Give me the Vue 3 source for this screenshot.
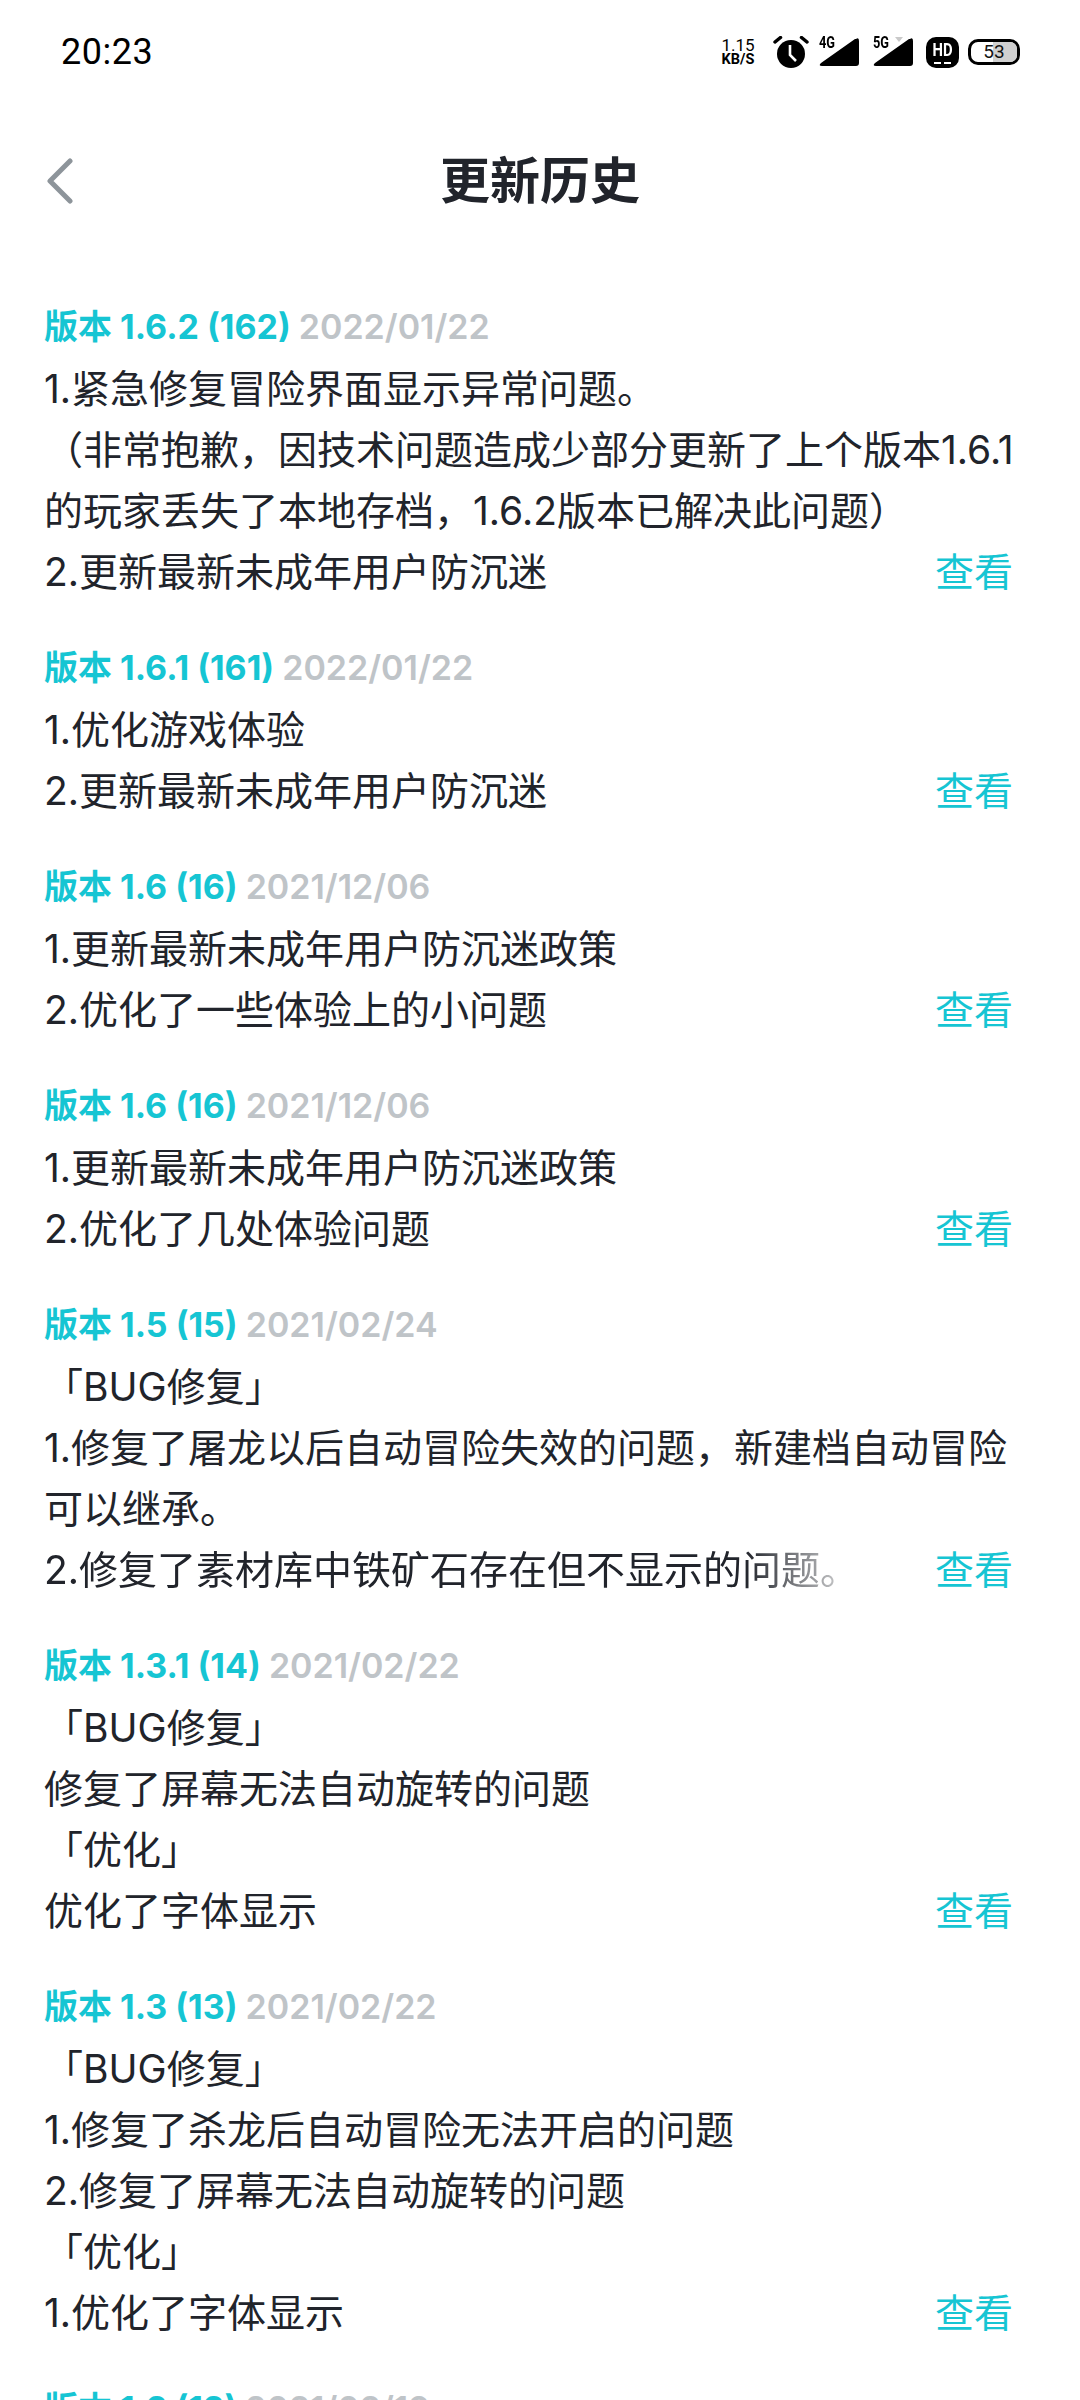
<script setup>
const entries = [
  { v: '版本 1.6.2 (162)', d: '2022/01/22', lines: ['1.紧急修复冒险界面显示异常问题。', '（非常抱歉，因技术问题造成少部分更新了上个版本1.6.1的玩家丢失了本地存档，1.6.2版本已解决此问题）'], last: '2.更新最新未成年用户防沉迷' },
  { v: '版本 1.6.1 (161)', d: '2022/01/22', lines: ['1.优化游戏体验'], last: '2.更新最新未成年用户防沉迷' },
  { v: '版本 1.6 (16)', d: '2021/12/06', lines: ['1.更新最新未成年用户防沉迷政策'], last: '2.优化了一些体验上的小问题' },
  { v: '版本 1.6 (16)', d: '2021/12/06', lines: ['1.更新最新未成年用户防沉迷政策'], last: '2.优化了几处体验问题' },
  { v: '版本 1.5 (15)', d: '2021/02/24', lines: ['「BUG修复」', '1.修复了屠龙以后自动冒险失效的问题，新建档自动冒险可以继承。'], last: '2.修复了素材库中铁矿石存在但不显示的问题。', fade: true },
  { v: '版本 1.3.1 (14)', d: '2021/02/22', lines: ['「BUG修复」', '修复了屏幕无法自动旋转的问题', '「优化」'], last: '优化了字体显示' },
  { v: '版本 1.3 (13)', d: '2021/02/22', lines: ['「BUG修复」', '1.修复了杀龙后自动冒险无法开启的问题', '2.修复了屏幕无法自动旋转的问题', '「优化」'], last: '1.优化了字体显示' },
  { v: '版本 1.2 (12)', d: '2021/02/19', lines: ['「优化」'], last: '1.优化了字体显示' },
]
</script>

<template>
  <div class="page">
    <div class="status">
      <span class="time">20:23</span>
      <div class="icons">
        <div class="speed"><span>1.15</span><b>KB/S</b></div>
        <svg class="alarm" width="36" height="32" viewBox="0 0 36 32">
          <circle cx="18" cy="18" r="14" fill="#000" />
          <path d="M2 6 7.5 1.5 M34 6 28.500 1.500" stroke="#000" stroke-width="3.500" stroke-linecap="round" />
          <path d="M17 9v10l6 6" stroke="#fff" stroke-width="2.600" fill="none" />
        </svg>
        <div class="sig">
          <small>4G</small>
          <svg width="40" height="28" viewBox="0 0 40 28"><path d="M37 1Q40-1 40 3V25Q40 28 37 28H3Q-1 28 2 25L36 1Z" fill="#000" /></svg>
        </div>
        <div class="sig">
          <small>5G</small>
          <svg width="40" height="28" viewBox="0 0 40 28"><path d="M37 1Q40-1 40 3V25Q40 28 37 28H3Q-1 28 2 25L36 1Z" fill="#000" /><path d="M22-1h8l-4 5z" fill="#c9c9c9" /></svg>
        </div>
        <div class="hd"><span>HD</span><i></i><i class="r"></i></div>
        <div class="batt"><span class="fill"></span><span class="num">53</span></div>
      </div>
    </div>

    <div class="nav">
      <svg class="back" width="30" height="46" viewBox="0 0 30 46"><path d="M25 3 5 23l20 20" fill="none" stroke="#8d949a" stroke-width="5" stroke-linecap="round" stroke-linejoin="round" /></svg>
      <h1>更新历史</h1>
    </div>

    <div class="list">
      <section v-for="(e, i) in entries" :key="i" class="entry">
        <div class="head"><span class="ver">{{ e.v }}</span> <span class="date">{{ e.d }}</span></div>
        <p v-for="(l, j) in e.lines" :key="j" class="line">{{ l }}</p>
        <div class="lastrow">
          <p class="line last" :class="{ fade: e.fade }">{{ e.last }}</p>
          <span class="view">查看</span>
        </div>
      </section>
    </div>
  </div>
</template>

<style>
html, body { margin: 0; background: #fff; }
</style>

<style scoped>
.page {
  width: 1080px;
  height: 2400px;
  overflow: hidden;
  background: #fff;
  font-family: Inter, "Noto Sans CJK SC", sans-serif;
  color: #21242b;
}
.status {
  height: 104px;
  display: flex;
  align-items: center;
  justify-content: space-between;
  padding: 0 60px 0 61px;
  box-sizing: border-box;
}
.time { font-family: Roboto, sans-serif; font-size: 36px; color: #000; letter-spacing: .5px; }
.icons { display: flex; align-items: center; color: #000; }
.speed { display: flex; flex-direction: column; align-items: center; font-family: Roboto, sans-serif; width: 40px; margin-right: 15px; }
.speed span { font-size: 17px; line-height: 15px; }
.speed b { font-size: 14.500px; line-height: 14px; font-weight: 700; }
.alarm { margin-right: 10px; }
.sig { position: relative; width: 40px; height: 28px; margin-right: 14px; }
.sig svg { display: block; position: relative; overflow: visible; }
.sig small { position: absolute; z-index: 1; left: 0; top: -2px; font: 700 16px/14px Roboto, sans-serif; transform: scaleX(.8); transform-origin: left; }
.hd { width: 33px; height: 31px; background: #000; border-radius: 10px; color: #fff; position: relative; text-align: center; margin-left: -1px; margin-right: 9px; }
.hd span { font: 700 19px/25px Roboto, sans-serif; display: block; transform: scaleX(.78); }
.hd i { position: absolute; left: 8px; width: 7px; bottom: 4px; height: 2px; background: #fff; }
.hd i.r { left: 18px; }
.batt { position: relative; width: 46px; height: 20px; border: 3px solid #000; border-radius: 10px; overflow: hidden; text-align: center; }
.fill { position: absolute; left: 22px; top: 0; bottom: 0; right: 0; background: #d0d0d0; }
.num { position: relative; display: block; font: 400 19px/20px Roboto, sans-serif; color: #111; }

.nav { position: relative; height: 74px; display: flex; align-items: center; justify-content: center; margin-top: 40px; }
.nav h1 { margin: 0; font-size: 50px; font-weight: 700; line-height: 74px; color: #21242b; }
.back { position: absolute; left: 45px; top: 14px; }

.list { padding: 0 44px; margin-top: 89px; }
.entry { margin-bottom: 46px; }
.head { font-size: 34px; font-weight: 700; line-height: 40px; margin-bottom: 11px; }
.ver { color: #16c5d3; }
.date { color: #bfc4c8; font-weight: 600; }
.line { margin: 0; font-size: 39px; line-height: 61px; font-weight: 400; color: #21242b; width: 975px; }
.lastrow { display: flex; justify-content: space-between; align-items: baseline; }
.last { width: auto; white-space: nowrap; }
.fade {
  -webkit-mask-image: linear-gradient(to right, #000 86%, rgba(0, 0, 0, .1) 100%);
  mask-image: linear-gradient(to right, #000 86%, rgba(0, 0, 0, .1) 100%);
}
.view { font-size: 39px; line-height: 61px; color: #16c5d3; margin-right: 23px; }
</style>
